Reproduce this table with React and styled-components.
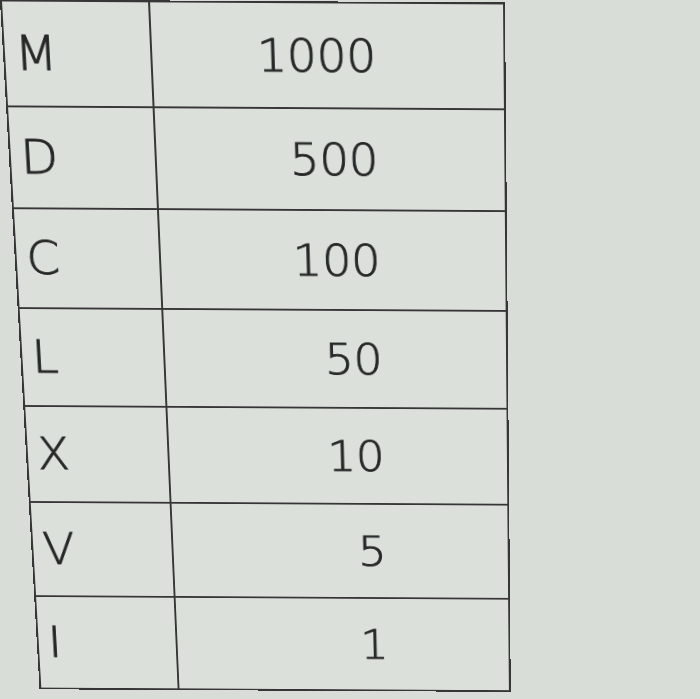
import React from 'react';
import styled, { createGlobalStyle } from 'styled-components';

const GlobalStyle = createGlobalStyle`
  html, body {
    margin: 0;
    padding: 0;
    background: #d9ddd7;
  }
`;

const Page = styled.div`
  width: 700px;
  height: 699px;
  overflow: hidden;
  background: #d9ddd7;
  padding: 1px 0 0 0;
  box-sizing: border-box;
  font-family: "DejaVu Sans ExtraLight", "DejaVu Sans", Verdana, sans-serif;
`;

const Table = styled.div`
  width: 501px;
  display: grid;
  grid-template-rows: repeat(7, 107px);
  border: 2px solid #363636;
  background: #dbe0da;
  transform-origin: 50% 0;
  transform: perspective(2000px) rotateX(-11deg) skewX(2.2deg) rotate(0.35deg);
`;

const Row = styled.div`
  display: grid;
  grid-template-columns: 146px 1fr;
  border-top: ${(p) => (p.first ? 'none' : '2px solid #363636')};
`;

const Cell = styled.div`
  display: flex;
  align-items: center;
  justify-content: ${(p) => (p.num ? 'flex-end' : 'flex-start')};
  padding: ${(p) => (p.num ? '0 128px 0 0' : '0 0 0 10px')};
  border-left: ${(p) => (p.num ? '2px solid #363636' : 'none')};
  color: #262827;
  -webkit-text-stroke: 0.9px #262827;
  font-size: ${(p) => (p.num ? '47px' : '49px')};
  font-weight: 300;
  line-height: 1;
`;

const rows = [
  ['M', '1000'],
  ['D', '500'],
  ['C', '100'],
  ['L', '50'],
  ['X', '10'],
  ['V', '5'],
  ['I', '1'],
];

const App = () => {
  return (
    <>
      <GlobalStyle />
      <Page>
        <Table>
          {rows.map(([sym, val], i) => (
            <Row key={sym} first={i === 0}>
              <Cell>{sym}</Cell>
              <Cell num>{val}</Cell>
            </Row>
          ))}
        </Table>
      </Page>
    </>
  );
};

export default App;
